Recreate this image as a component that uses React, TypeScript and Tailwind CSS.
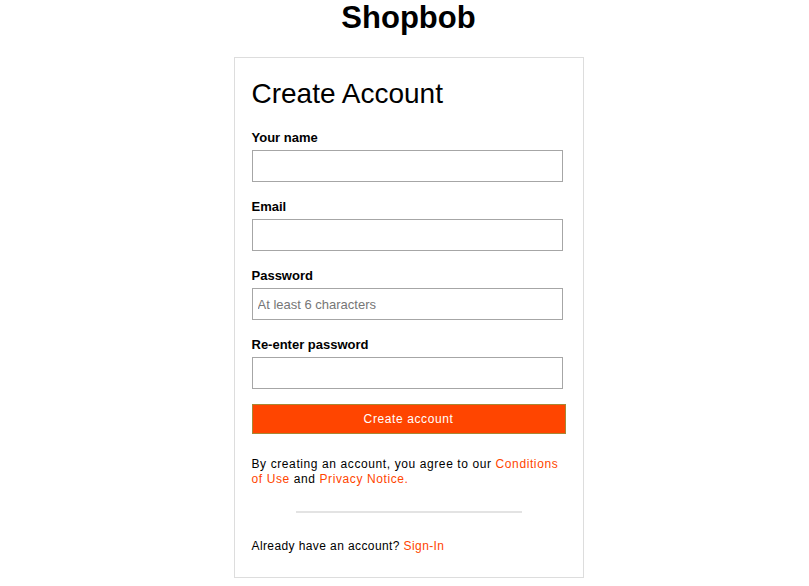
import React from "react";

const font = { fontFamily: '"Liberation Sans", Arial, sans-serif' };

function Field({ label, placeholder, type }: { label: string; placeholder?: string; type?: string }) {
  return (
    <div className="flex flex-col">
      <label className="text-[13px] font-bold leading-[16px] text-black mb-[4px]">{label}</label>
      <input
        type={type ?? "text"}
        placeholder={placeholder}
        className="w-[311px] h-[32px] border border-[#a6a6a6] px-[5px] text-[13px] text-black placeholder:text-[#767676] outline-none"
      />
    </div>
  );
}

export default function App() {
  return (
    <div className="min-h-[586px] bg-white flex flex-col items-center pl-[8px]" style={font}>
      <h1 className="text-[31px] font-bold leading-[36px] text-black mt-0">Shopbob</h1>

      <div className="mt-[21px] w-[350px] border border-[#dddddd] pt-[20px] pl-[17px] pr-[16px] pb-[23px]">
        <h2 className="text-[28px] font-normal leading-[32px] text-black">Create Account</h2>

        <div className="mt-[20px] flex flex-col gap-[17px]">
          <Field label="Your name" />
          <Field label="Email" type="email" />
          <Field label="Password" placeholder="At least 6 characters" type="password" />
          <Field label="Re-enter password" type="password" />
        </div>

        <button className="mt-[15px] w-[314px] h-[30px] bg-[#ff4500] border border-[#a88734] text-white text-[12px] tracking-[0.6px]">
          Create account
        </button>

        <p className="mt-[23px] text-[12px] leading-[15px] tracking-[0.6px] text-black">
          By creating an account, you agree to our{" "}
          <a className="text-[#ff4500]">Conditions</a>{" "}
          <a className="text-[#ff4500]">of Use</a> and{" "}
          <a className="text-[#ff4500]">Privacy Notice.</a>
        </p>

        <div className="mt-[24px] flex justify-center">
          <div className="w-[226px] h-[2px] bg-[#e3e3e3]" />
        </div>

        <p className="mt-[26px] text-[12px] leading-[15px] tracking-[0.4px] text-black">
          Already have an account? <a className="text-[#ff4500]">Sign-In</a>
        </p>
      </div>
    </div>
  );
}
